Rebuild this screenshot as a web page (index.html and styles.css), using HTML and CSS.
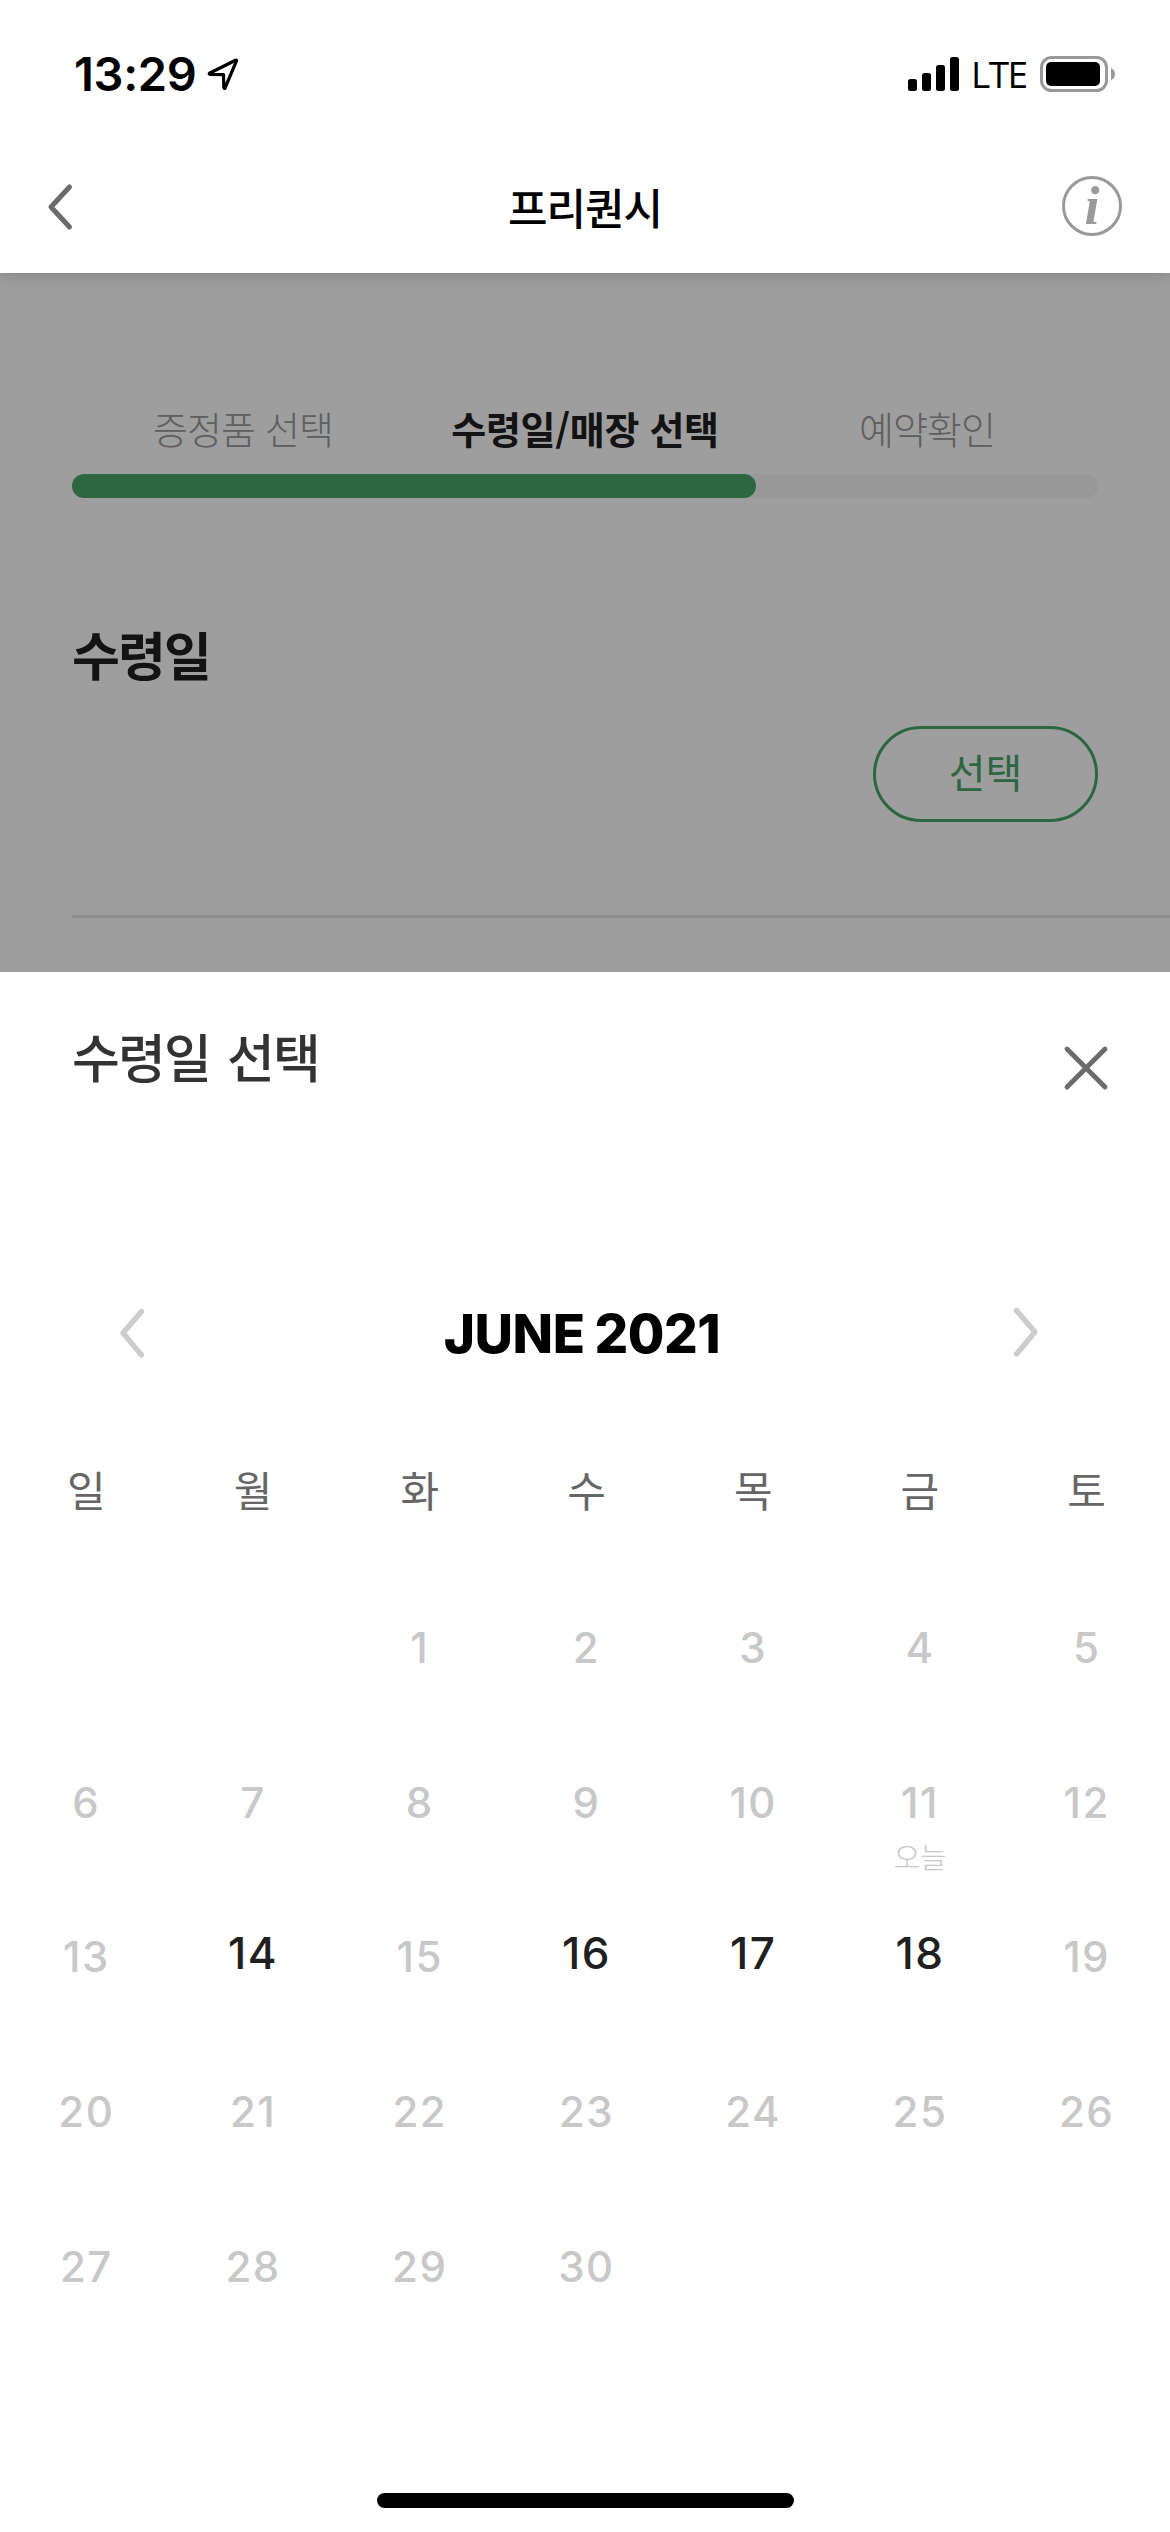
FILE: index.html
```html
<!DOCTYPE html>
<html lang="ko">
<head>
    <meta charset="UTF-8">
    <meta name="viewport" content="width=device-width, initial-scale=1.0">
    <title>프리퀀시</title>
    <link rel="stylesheet" href="styles.css">
</head>
<body>

    <header class="header">
        <div class="status-bar">
            <div class="status-left">
                <span class="time">13:29</span>
                <svg class="location-icon" width="34" height="36" viewBox="0 0 34 36">
                    <path d="M3.5 17.2 L29.6 4.2 Q31 3.6 30.4 5.2 L19 32 Q18 33 17.8 31.4 L17.5 18.6 L4 18.4 Q2.6 17.8 3.5 17.2 Z" fill="none" stroke="#000" stroke-width="3.2" stroke-linejoin="round"/>
                </svg>
            </div>
            <div class="status-right">
                <svg width="52" height="36" viewBox="0 0 52 36">
                    <rect x="0" y="23" width="9" height="12" rx="2.5"/>
                    <rect x="14" y="17" width="9" height="18" rx="2.5"/>
                    <rect x="28" y="9" width="9" height="26" rx="2.5"/>
                    <rect x="42" y="1" width="9" height="34" rx="2.5"/>
                </svg>
                <span class="network">LTE</span>
                <svg width="76" height="36" viewBox="0 0 76 36">
                    <rect x="1.5" y="1.5" width="65" height="33" rx="10" fill="none" stroke="#999" stroke-width="3"/>
                    <rect x="6" y="6" width="54" height="24" rx="5"/>
                    <path d="M71 12 Q75 14 75 18 Q75 22 71 24 Z" fill="#999"/>
                </svg>
            </div>
        </div>
        <nav class="nav-bar">
            <svg width="60" height="60" viewBox="0 0 60 60">
                <path d="M31.5 11 L13 31 L31.5 51" fill="none" stroke="#6b6b6b" stroke-width="5" stroke-linecap="round" stroke-linejoin="round"/>
            </svg>
            <h1 class="nav-title">프리퀀시</h1>
            <span class="info">i</span>
        </nav>
    </header>

    <main class="content">
        <div class="steps">
            <span class="step">증정품 선택</span>
            <span class="step active">수령일/매장 선택</span>
            <span class="step">예약확인</span>
        </div>
        <div class="progress"><div class="progress-fill"></div></div>

        <h2 class="section-title">수령일</h2>
        <button class="select-btn" type="button">선택</button>
        <div class="divider"></div>
        <div class="dim"></div>
    </main>

    <!-- Date picker bottom sheet -->
    <section class="sheet">
        <div class="sheet-header">
            <h2 class="sheet-title">수령일 선택</h2>
            <svg class="close" width="48" height="48" viewBox="0 0 48 48">
                <path d="M5 5 L43 43 M43 5 L5 43" stroke="#6b6b6b" stroke-width="4.8" stroke-linecap="round"/>
            </svg>
        </div>

        <div class="month-nav">
            <svg width="28" height="52" viewBox="0 0 28 52">
                <path d="M23.5 3.5 L5 25 L23.5 47" fill="none" stroke="#ccc" stroke-width="5.4" stroke-linecap="round" stroke-linejoin="round"/>
            </svg>
            <span class="month">JUNE 2021</span>
            <svg width="28" height="52" viewBox="0 0 28 52">
                <path d="M4.5 2.5 L23 24 L4.5 46" fill="none" stroke="#ccc" stroke-width="5.4" stroke-linecap="round" stroke-linejoin="round"/>
            </svg>
        </div>

        <div class="weekdays">
            <span>일</span><span>월</span><span>화</span><span>수</span><span>목</span><span>금</span><span>토</span>
        </div>

        <div class="days">
            <div class="day"></div>
            <div class="day"></div>
            <div class="day">1</div>
            <div class="day">2</div>
            <div class="day">3</div>
            <div class="day">4</div>
            <div class="day">5</div>

            <div class="day">6</div>
            <div class="day">7</div>
            <div class="day">8</div>
            <div class="day">9</div>
            <div class="day">10</div>
            <div class="day">11<span class="today">오늘</span></div>
            <div class="day">12</div>

            <div class="day">13</div>
            <div class="day available">14</div>
            <div class="day">15</div>
            <div class="day available">16</div>
            <div class="day available">17</div>
            <div class="day available">18</div>
            <div class="day">19</div>

            <div class="day">20</div>
            <div class="day">21</div>
            <div class="day">22</div>
            <div class="day">23</div>
            <div class="day">24</div>
            <div class="day">25</div>
            <div class="day">26</div>

            <div class="day">27</div>
            <div class="day">28</div>
            <div class="day">29</div>
            <div class="day">30</div>
        </div>

        <div class="home-indicator"></div>
    </section>

</body>
</html>
```
FILE: styles.css
```css
* {
    box-sizing: border-box;
}

body {
    font-family: "Noto Sans CJK KR", sans-serif;
    margin: 0;
    width: 1170px;
    height: 2532px;
    display: flex;
    flex-direction: column;
    background: #fff;
    overflow: hidden;
}

h1, h2 {
    margin: 0;
}

svg {
    display: block;
    flex: none;
}

/* Header */
.header {
    position: relative;
    z-index: 2;
    height: 273px;
    background: #fff;
    box-shadow: 0 0 16px rgba(0, 0, 0, 0.22);
}

.status-bar {
    display: flex;
    justify-content: space-between;
    height: 132px;
    padding: 56px 54px 0 74px;
    font-family: Inter, sans-serif;
}

.status-left, .status-right {
    display: flex;
    height: 36px;
    align-items: center;
}

.time {
    width: 132px;
    font-size: 47px;
    font-weight: 600;
    line-height: 36px;
    letter-spacing: -0.3px;
}

.network {
    width: 69px;
    margin-left: 11px;
    font-family: "Open Sans", sans-serif;
    font-size: 37px;
    font-weight: 500;
    line-height: 38px;
    letter-spacing: -1.6px;
}

.nav-bar {
    display: flex;
    justify-content: space-between;
    align-items: center;
    height: 60px;
    margin-top: 44px;
    padding: 0 48px 0 38px;
}

.nav-title {
    margin-left: 10px;
    font-size: 43px;
    font-weight: 500;
    line-height: 60px;
    letter-spacing: -1px;
}

.info {
    width: 60px;
    height: 60px;
    border: 3px solid #999;
    border-radius: 50%;
    color: #999;
    font: italic bold 54px/54px "Liberation Serif", serif;
    text-align: center;
}

/* Page behind the sheet */
.content {
    position: relative;
    height: 699px;
    padding: 126px 72px 0;
}

.dim {
    position: absolute;
    inset: 0;
    background: rgba(0, 0, 0, 0.38);
}

.steps {
    display: grid;
    grid-template-columns: repeat(3, 1fr);
    text-align: center;
    height: 56px;
    margin-bottom: 19px;
}

.step {
    font-size: 38px;
    font-weight: 300;
    line-height: 57px;
    letter-spacing: -0.9px;
    white-space: nowrap;
    color: #999;
}

.step.active {
    font-weight: 700;
    letter-spacing: -0.3px;
    color: #202020;
}

.progress {
    height: 24px;
    border-radius: 12px;
    background: #f5f5f5;
}

.progress-fill {
    width: 66.667%;
    height: 24px;
    border-radius: 12px;
    background: #48a669;
}

.section-title {
    margin-top: 116px;
    font-size: 52px;
    font-weight: 700;
    line-height: 80px;
    letter-spacing: -1.8px;
    color: #202020;
}

.select-btn {
    display: block;
    width: 225px;
    height: 96px;
    margin: 32px 0 0 auto;
    padding: 0 0 6px;
    border: 3px solid #48a669;
    border-radius: 48px;
    background: none;
    color: #48a669;
    font-family: inherit;
    font-size: 40px;
    font-weight: 400;
    line-height: 84px;
}

.divider {
    height: 3px;
    margin: 93px -72px 0 0;
    background: #e2e2e2;
}

/* Bottom sheet */
.sheet {
    position: relative;
    flex: 1;
    padding-top: 44px;
    background: #fff;
}

.sheet-header {
    display: flex;
    justify-content: space-between;
    height: 76px;
    padding: 0 60px 0 72px;
}

.sheet-title {
    font-size: 52px;
    font-weight: 500;
    line-height: 79px;
    letter-spacing: -1.8px;
    word-spacing: 4px;
    color: #333;
}

.close {
    margin-top: 28px;
}

.month-nav {
    display: flex;
    justify-content: space-between;
    align-items: center;
    height: 60px;
    margin-top: 212px;
    padding: 0 130px 0 118px;
}

.month {
    margin-left: 6px;
    font-family: Inter, sans-serif;
    font-size: 53px;
    font-weight: 800;
    line-height: 62px;
    letter-spacing: -0.5px;
    word-spacing: -1px;
    color: #000;
}

.weekdays, .days {
    display: grid;
    grid-template-columns: repeat(7, 1fr);
    padding-left: 3px;
    text-align: center;
}

.weekdays {
    margin-top: 95px;
    font-size: 42px;
    font-weight: 400;
    line-height: 60px;
    color: #666;
}

.days {
    grid-auto-rows: 154.7px;
    margin-top: 91px;
}

.day {
    font-family: Inter, sans-serif;
    font-size: 42px;
    font-weight: 450;
    line-height: 76px;
    letter-spacing: 1.5px;
    color: #c8c8c8;
}

.day.available {
    font-size: 44px;
    font-weight: 500;
    line-height: 68px;
    color: #202020;
}

.today {
    display: block;
    font-family: "Noto Sans CJK KR", sans-serif;
    font-size: 29px;
    font-weight: 300;
    line-height: 30px;
    letter-spacing: -0.5px;
}

.home-indicator {
    position: absolute;
    left: 377px;
    bottom: 24px;
    width: 417px;
    height: 15px;
    border-radius: 8px;
    background: #000;
}
```
